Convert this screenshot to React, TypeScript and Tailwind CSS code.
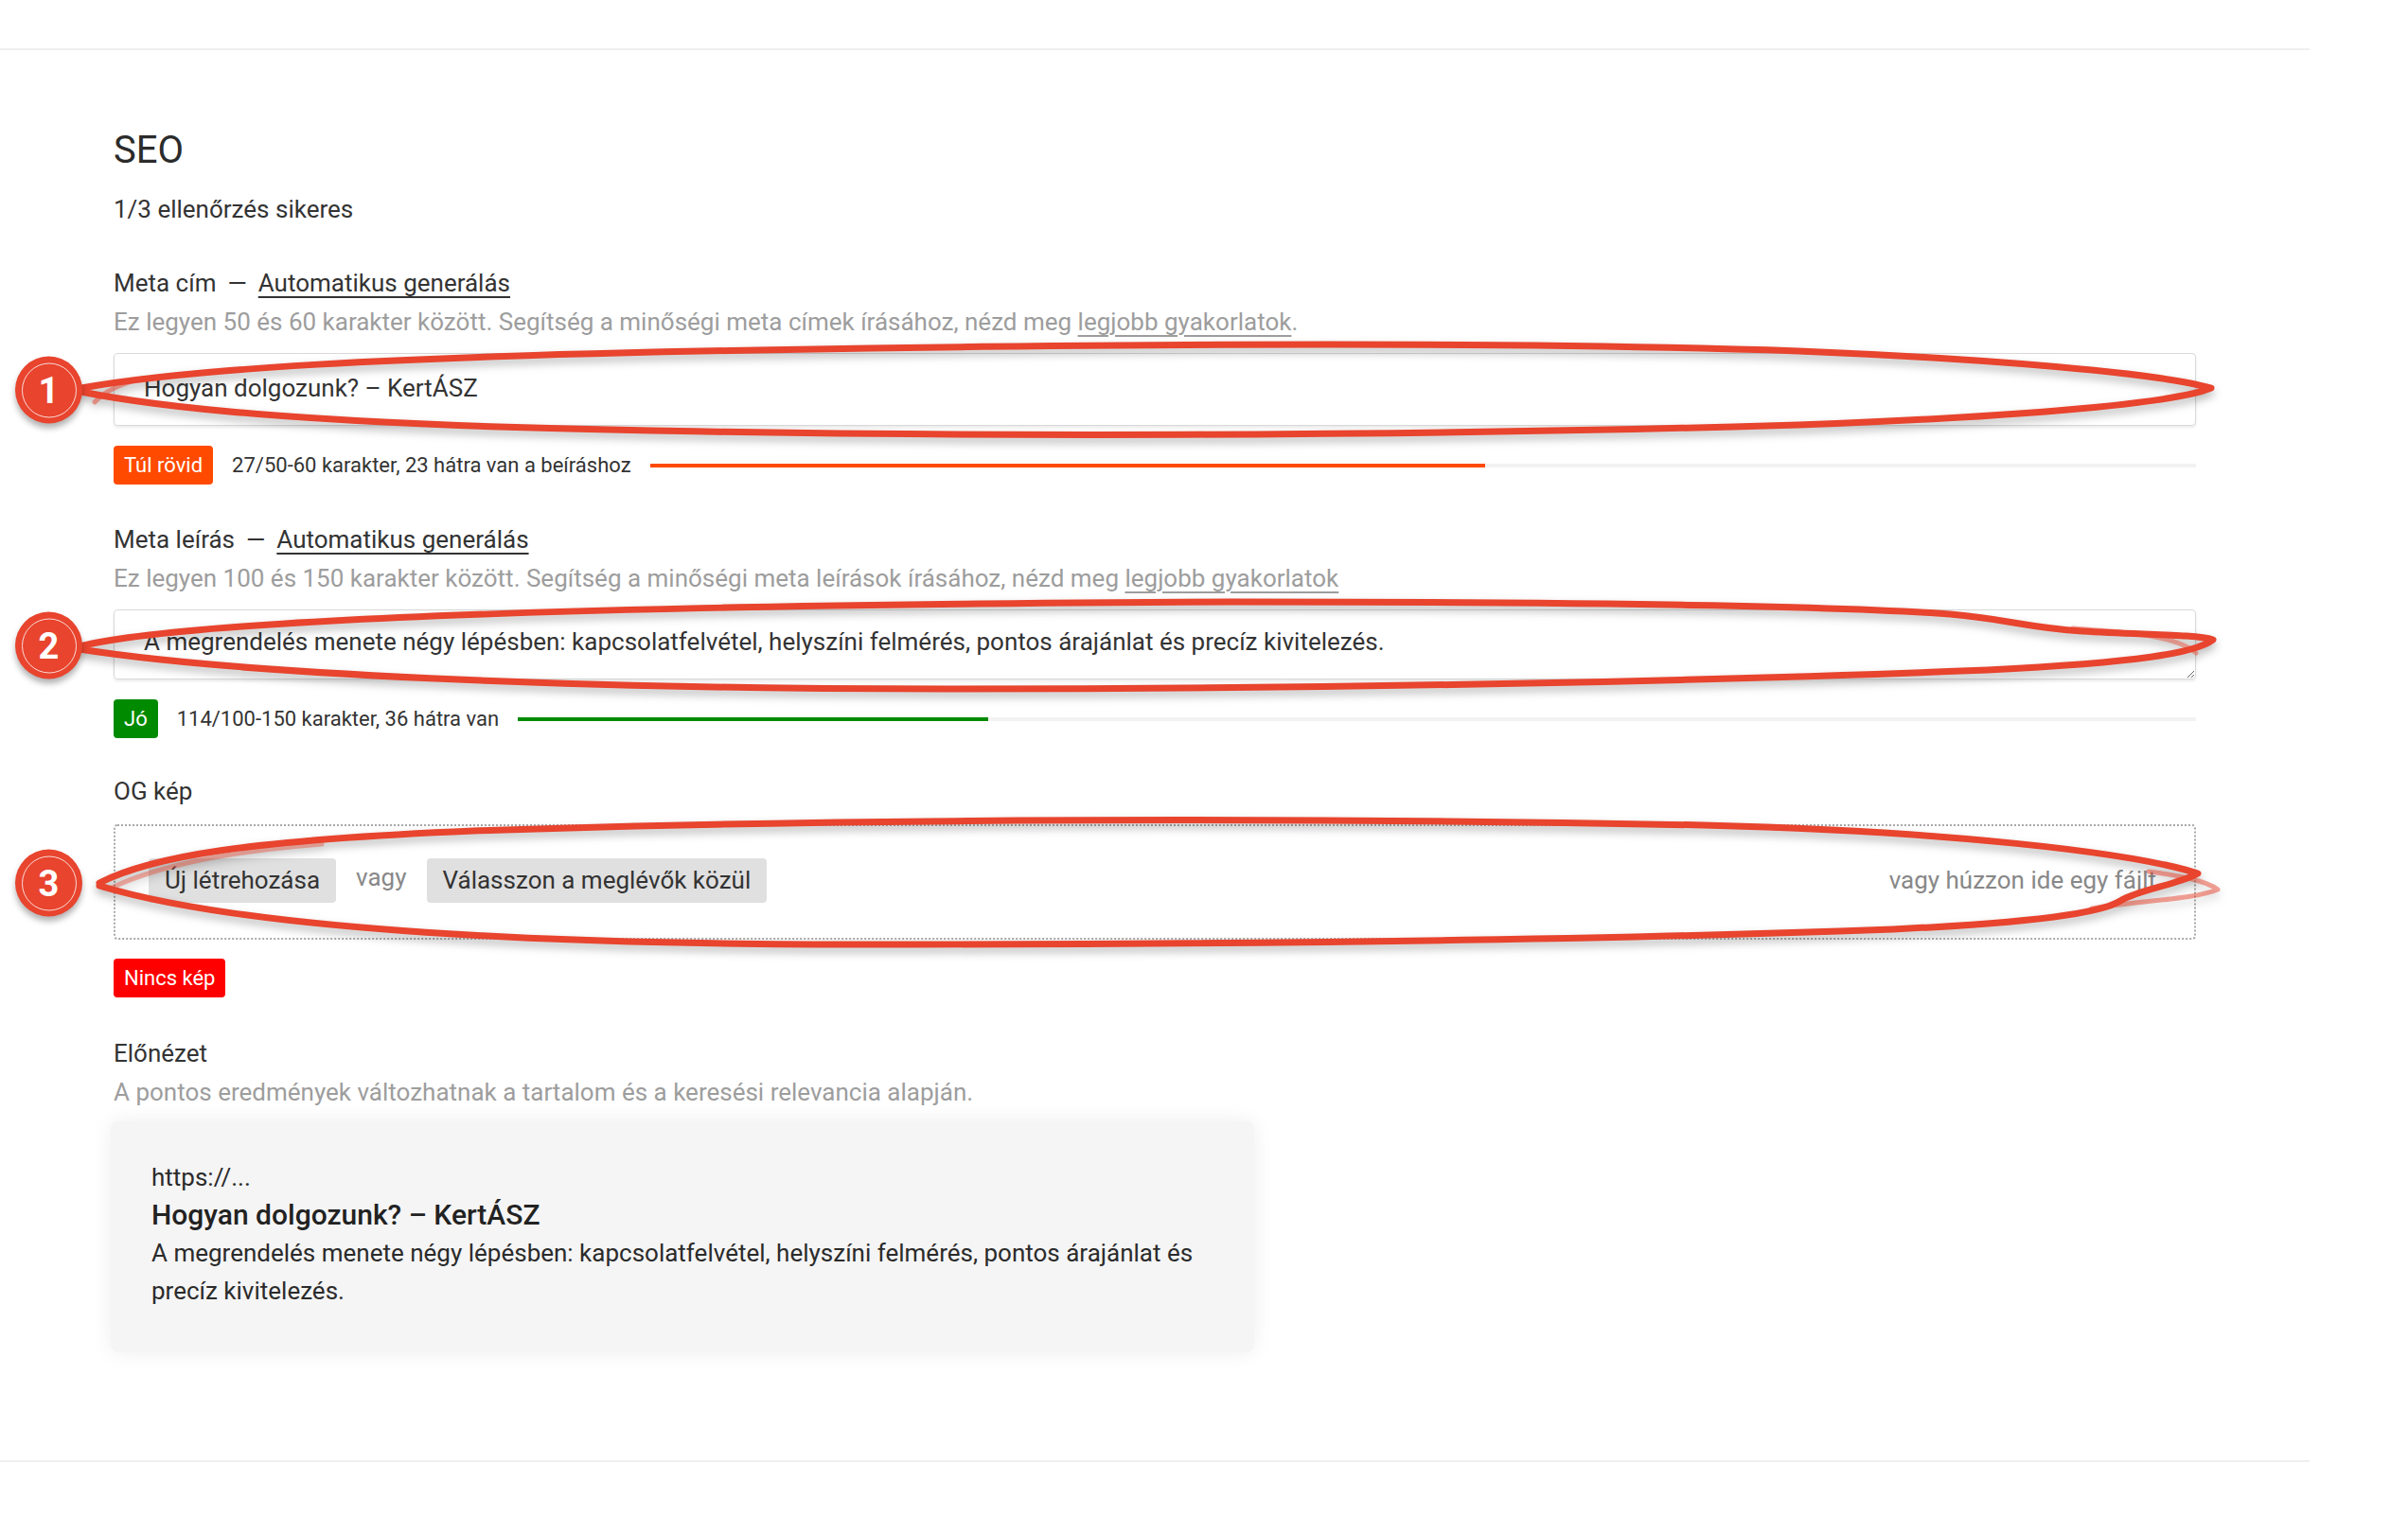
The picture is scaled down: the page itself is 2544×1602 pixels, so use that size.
import { ReactNode } from "react";

const sans = "font-['Roboto','Liberation_Sans',sans-serif]";

function Tag({ tone, children }: { tone: string; children: ReactNode }) {
  return (
    <span className={`inline-flex h-[41px] shrink-0 items-center rounded-[4px] px-[11px] text-[22px] text-white ${tone}`}>
      {children}
    </span>
  );
}

function LengthRow({
  tag,
  tone,
  barTone,
  text,
  fill,
}: {
  tag: string;
  tone: string;
  barTone: string;
  text: string;
  fill: number;
}) {
  return (
    <div className="mt-[21px] flex items-center gap-[20px]">
      <Tag tone={tone}>{tag}</Tag>
      <span className="shrink-0 text-[22px] text-[#333]">{text}</span>
      <div className="h-[4px] flex-1 bg-[#f2f2f2]">
        <div className={`h-full ${barTone}`} style={{ width: `${fill * 100}%` }} />
      </div>
    </div>
  );
}

function FieldLabel({ title, link }: { title: string; link?: string }) {
  return (
    <div className="text-[26px] leading-[40px] text-[#333]">
      {title}
      {link ? (
        <>
          <span className="mx-[12px]">—</span>
          <span className="underline underline-offset-[5px]">{link}</span>
        </>
      ) : null}
    </div>
  );
}

function Hint({ children }: { children: ReactNode }) {
  return <div className="mt-px text-[26px] leading-[40px] text-[#9d9d9d]">{children}</div>;
}

// hand drawn marks laid over the form
function Annotations() {
  const badges = [
    { n: "1", top: 412 },
    { n: "2", top: 682 },
    { n: "3", top: 933 },
  ];
  return (
    <>
      <svg
        className="pointer-events-none absolute left-0 top-0 drop-shadow-[0_5px_5px_rgba(0,0,0,0.28)]"
        width="2544"
        height="1602"
        viewBox="0 0 2544 1602"
        fill="none"
        stroke="#e8442e"
        strokeLinecap="round"
        strokeLinejoin="round"
      >
        <path
          strokeWidth="7"
          d="M86,410 C200,390 400,377 800,370 C1200,363 1600,361 1900,371 C2100,379 2280,394 2336,410 C2300,425 2150,440 1900,449 C1500,461 1000,463 600,453 C350,447 180,433 86,414"
        />
        <path strokeWidth="5" opacity="0.5" d="M100,425 C110,414 125,406 150,400" />
        <path
          strokeWidth="7"
          d="M84,683 C180,660 500,640 1300,636 C1700,636 1950,641 2060,649 C2120,654 2140,663 2200,667 C2260,671 2320,670 2338,676 C2320,690 2260,700 2100,708 C1800,720 1400,728 1000,728 C600,728 250,712 84,686"
        />
        <path strokeWidth="5" opacity="0.45" d="M2190,664 C2250,668 2300,672 2320,690" />
        <path
          strokeWidth="7"
          d="M105,933 C160,905 260,888 500,878 C900,864 1400,864 1800,872 C2050,878 2250,900 2322,923 C2300,935 2260,940 2240,952 C2220,965 2150,975 2000,982 C1700,993 1300,998 900,998 C550,998 250,980 105,936"
        />
        <path strokeWidth="5" opacity="0.5" d="M2210,960 C2260,952 2320,950 2343,940 C2330,930 2300,925 2270,921" />
        <path strokeWidth="5" opacity="0.4" d="M118,938 C170,914 240,900 340,892" />
      </svg>
      {badges.map((b) => (
        <div
          key={b.n}
          className="pointer-events-none absolute left-[16px] flex h-[71px] w-[71px] -translate-y-1/2 items-center justify-center rounded-full bg-[#e8442e] shadow-[0_5px_6px_rgba(0,0,0,0.3)]"
          style={{ top: b.top }}
        >
          <div className="flex h-[58px] w-[58px] items-center justify-center rounded-full border-[1.5px] border-white/80">
            <span className="text-[38px] font-bold leading-none text-white">{b.n}</span>
          </div>
        </div>
      ))}
    </>
  );
}

export default function App() {
  return (
    <div className={`relative h-[1602px] w-[2544px] overflow-hidden bg-white ${sans}`}>
      <div className="w-[2440px]">
        <div className="h-[53px] border-b-2 border-[#efefef]" />

        <section className="px-[120px] pb-[114px] pt-[82px]">
          <h2 className="text-[40px] leading-[48px] text-[#2b2b2b]">SEO</h2>
          <p className="mt-[18px] text-[26px] leading-[40px] text-[#333]">1/3 ellenőrzés sikeres</p>

          {/* Meta cím */}
          <div className="mt-[38px]">
            <FieldLabel title="Meta cím" link="Automatikus generálás" />
            <Hint>
              Ez legyen 50 és 60 karakter között. Segítség a minőségi meta címek írásához, nézd meg{" "}
              <span className="underline underline-offset-[5px]">legjobb gyakorlatok</span>.
            </Hint>
            <input
              defaultValue="Hogyan dolgozunk? – KertÁSZ"
              className="mt-[13px] block h-[77px] w-full rounded-[4px] border border-[#d9d9d9] px-[31px] pb-[3px] text-[26px] text-[#333] shadow-[0_2px_3px_rgba(0,0,0,0.08)] outline-none"
            />
            <LengthRow
              tag="Túl rövid"
              tone="bg-[#ff4a00]"
              barTone="bg-[#ff4a00]"
              text="27/50-60 karakter, 23 hátra van a beíráshoz"
              fill={27 / 50}
            />
          </div>

          {/* Meta leírás */}
          <div className="mt-[38px]">
            <FieldLabel title="Meta leírás" link="Automatikus generálás" />
            <Hint>
              Ez legyen 100 és 150 karakter között. Segítség a minőségi meta leírások írásához, nézd meg{" "}
              <span className="underline underline-offset-[5px]">legjobb gyakorlatok</span>
            </Hint>
            <textarea
              defaultValue="A megrendelés menete négy lépésben: kapcsolatfelvétel, helyszíni felmérés, pontos árajánlat és precíz kivitelezés."
              className="mt-[13px] block h-[74px] w-full resize-y rounded-[4px] border border-[#d9d9d9] px-[31px] pb-[18px] pt-[13px] text-[26px] leading-[40px] text-[#333] shadow-[0_2px_3px_rgba(0,0,0,0.08)] outline-none"
            />
            <LengthRow
              tag="Jó"
              tone="bg-[#008a00]"
              barTone="bg-[#008a00]"
              text="114/100-150 karakter, 36 hátra van"
              fill={(114 - 100) / 50}
            />
          </div>

          {/* OG kép */}
          <div className="mt-[36px]">
            <FieldLabel title="OG kép" />
            <div className="mt-[15px] flex h-[122px] items-center justify-between rounded-[4px] border-2 border-dotted border-[#a9a9a9] pb-[4px] pl-[35px] pr-[40px]">
              <div className="flex items-center gap-[21px]">
                <button className="h-[47px] rounded-[4px] bg-[#e0e0e0] px-[17px] text-[26px] text-[#333]">
                  Új létrehozása
                </button>
                <span className="-translate-y-[3px] text-[26px] text-[#888]">vagy</span>
                <button className="h-[47px] rounded-[4px] bg-[#e0e0e0] px-[17px] text-[26px] text-[#333]">
                  Válasszon a meglévők közül
                </button>
              </div>
              <span className="text-[26px] text-[#888]">vagy húzzon ide egy fájlt</span>
            </div>
            <div className="mt-[20px]">
              <Tag tone="bg-[#ff0000]">Nincs kép</Tag>
            </div>
          </div>

          {/* Előnézet */}
          <div className="mt-[39px]">
            <FieldLabel title="Előnézet" />
            <Hint>A pontos eredmények változhatnak a tartalom és a keresési relevancia alapján.</Hint>
            <div className="-ml-[3px] mt-[11px] w-[1208px] rounded-[8px] bg-[#f5f5f5] px-[43px] pb-[45px] pt-[39px] text-[#2b2b2b] shadow-[0_0_22px_rgba(0,0,0,0.07)]">
              <div className="text-[26px] leading-[40px]">https://...</div>
              <div className="text-[30px] font-medium leading-[40px] text-[#222]">Hogyan dolgozunk? – KertÁSZ</div>
              <div className="text-[26px] leading-[40px]">
                A megrendelés menete négy lépésben: kapcsolatfelvétel, helyszíni felmérés, pontos árajánlat és precíz
                kivitelezés.
              </div>
            </div>
          </div>
        </section>

        <div className="border-t-2 border-[#efefef]" />
      </div>

      <Annotations />
    </div>
  );
}
